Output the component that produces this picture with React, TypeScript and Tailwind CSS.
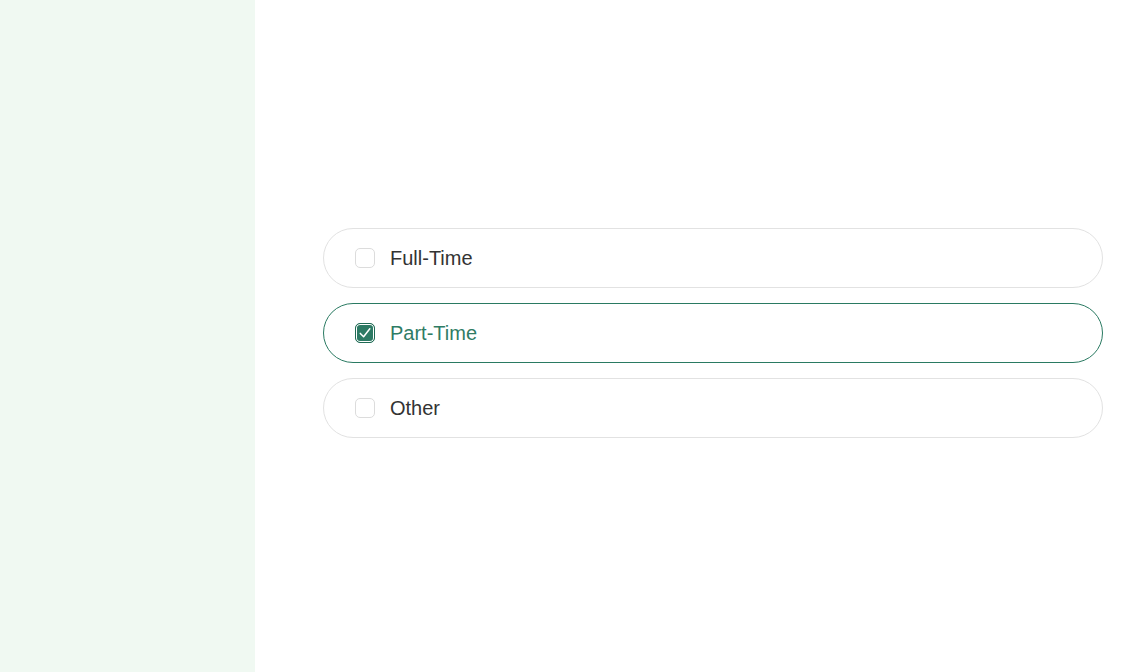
import React from "react";

const items = [
  { label: "Full-Time", checked: false },
  { label: "Part-Time", checked: true },
  { label: "Other", checked: false },
];

export default function App() {
  return (
    <div className="flex h-[672px] w-full bg-white" style={{ fontFamily: '"Liberation Sans", Arial, sans-serif' }}>
      <div className="w-[255px] shrink-0 bg-[#f0f9f2]" />
      <div className="flex flex-1 flex-col gap-[15px] pl-[68px] pr-[20px] pt-[228px]">
        {items.map((it) =>
          it.checked ? (
            <div
              key={it.label}
              className="flex h-[60px] items-center rounded-full border border-[#2a7a62] pl-[31px]"
            >
              <span className="flex h-[20px] w-[20px] items-center justify-center rounded-[5px] border border-[#1f6a54] bg-[#2d7a64] ring-1 ring-inset ring-white">
                <svg width="14" height="14" viewBox="0 0 14 14" fill="none">
                  <path d="M2.3 7.4 L5.6 10.8 L11.8 2.8" stroke="white" strokeWidth="1.5" strokeLinecap="round" strokeLinejoin="round" />
                </svg>
              </span>
              <span className="ml-[15px] text-[20px] text-[#2f7c65]">{it.label}</span>
            </div>
          ) : (
            <div
              key={it.label}
              className="flex h-[60px] items-center rounded-full border border-[#e2e2e2] pl-[31px]"
            >
              <span className="h-[20px] w-[20px] rounded-[5px] border border-[#dcdcdc] bg-white" />
              <span className="ml-[15px] text-[20px] text-[#333333]">{it.label}</span>
            </div>
          )
        )}
      </div>
    </div>
  );
}
